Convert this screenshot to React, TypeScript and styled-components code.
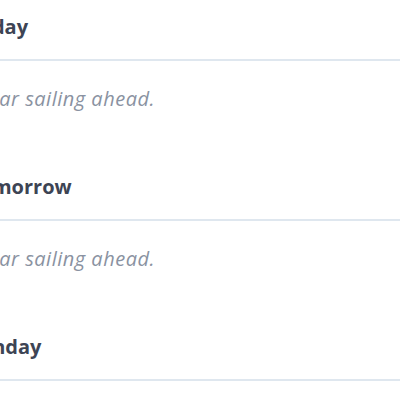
import styled, { createGlobalStyle } from "styled-components";

const GlobalStyle = createGlobalStyle`
  body {
    margin: 0;
    background: #ffffff;
    font-family: "Open Sans", "Liberation Sans", sans-serif;
  }
`;

const Page = styled.div`
  width: 400px;
  height: 400px;
  overflow: hidden;
  background: #ffffff;
`;

// the agenda is scrolled a little to the left, so the labels run off the edge
const List = styled.div`
  display: flex;
  flex-direction: column;
  margin-left: -32px;
`;

const Day = styled.section`
  display: flex;
  flex-direction: column;
`;

const DayHeader = styled.h3`
  margin: 0;
  padding: 13px 0 18px;
  font-size: 20px;
  font-weight: 700;
  line-height: 28px;
  color: #3d4454;
  border-bottom: 2px solid #dfe7ef;
`;

const Empty = styled.p`
  margin: 0;
  padding: 26px 0 49px 3px;
  font-size: 20px;
  font-style: italic;
  line-height: 24px;
  letter-spacing: 0.5px;
  color: #8a92a1;
`;

const days = ["Today", "Tomorrow", "Sunday"];

export default function App() {
  return (
    <Page>
      <GlobalStyle />
      <List>
        {days.map((d) => (
          <Day key={d}>
            <DayHeader>{d}</DayHeader>
            <Empty>Clear sailing ahead.</Empty>
          </Day>
        ))}
      </List>
    </Page>
  );
}
